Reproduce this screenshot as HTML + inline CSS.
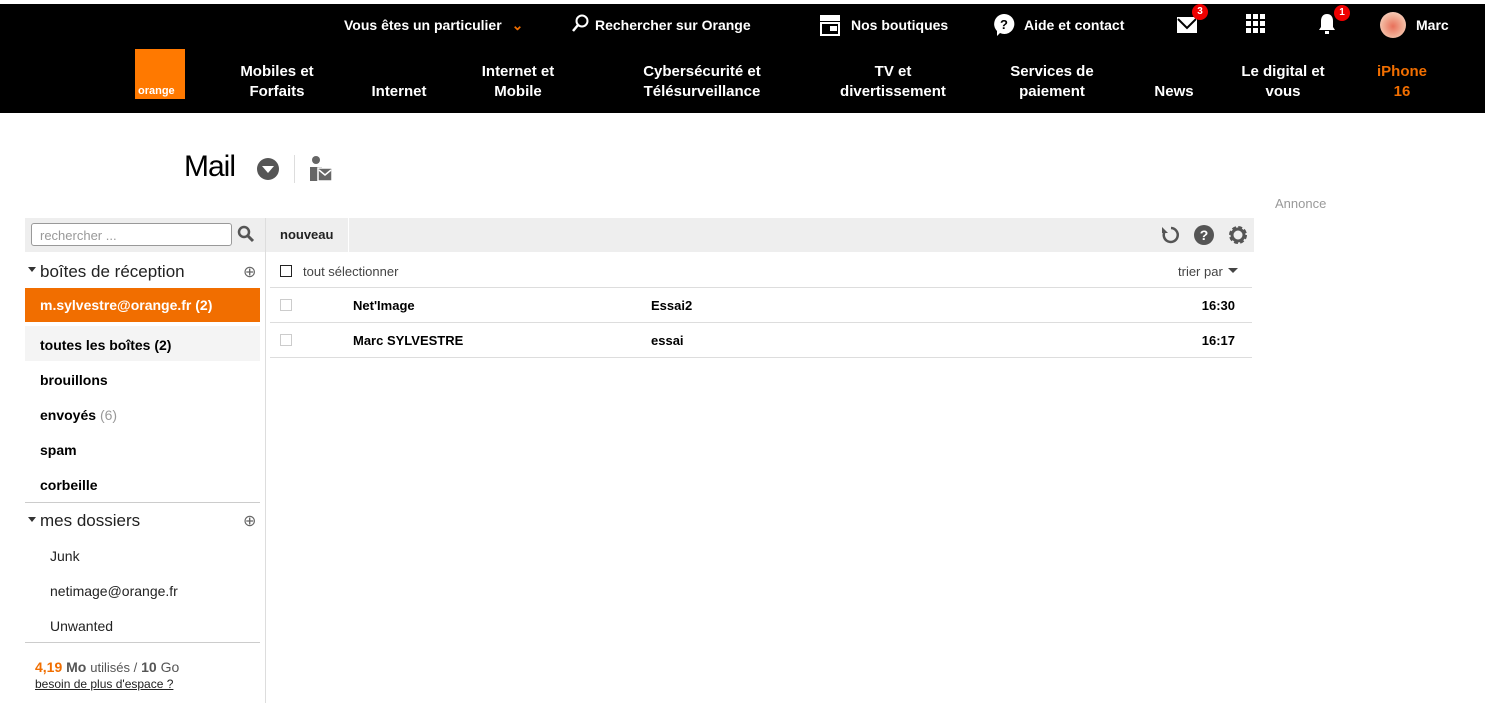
<!DOCTYPE html>
<html><head><meta charset="utf-8"><style>
*{margin:0;padding:0;box-sizing:border-box}
body{width:1485px;height:703px;overflow:hidden;background:#fff;font-family:"Liberation Sans",Arial,sans-serif;color:#000;position:relative}
.a{position:absolute}
.hdr{position:absolute;left:0;top:4px;width:1485px;height:109px;background:#000}
.w{color:#fff;font-weight:bold;font-size:14px;white-space:nowrap}
.nav{color:#fff;font-weight:bold;font-size:15px;text-align:center;line-height:20px;white-space:nowrap}
.badge{position:absolute;width:16px;height:16px;border-radius:8px;background:#e00;color:#fff;font-size:10px;font-weight:bold;text-align:center;line-height:16px}
.side{font-size:14px;font-weight:bold}
.fold{font-size:14px;color:#222}
.row{position:absolute;left:270px;width:982px;height:35px;border-bottom:1px solid #ddd;font-size:13px;font-weight:bold}
.cb{position:absolute;width:12px;height:12px;border:1px solid #ccc}
</style></head><body>
<div class="hdr"></div>
<div class="a w" style="left:344px;top:17px">Vous êtes un particulier <span style="color:#f16e00;margin-left:6px">&#8964;</span></div>
<svg class="a" style="left:571px;top:14px" width="20" height="20" viewBox="0 0 20 20"><circle cx="11" cy="7" r="5.5" fill="none" stroke="#fff" stroke-width="2"/><path d="M7 11L2 17" stroke="#fff" stroke-width="2.5"/></svg>
<div class="a w" style="left:595px;top:17px">Rechercher sur Orange</div>
<svg class="a" style="left:819px;top:14px" width="22" height="22" viewBox="0 0 22 22"><rect x="1" y="1" width="20" height="6" fill="#fff"/><rect x="2" y="9" width="18" height="12" fill="none" stroke="#fff" stroke-width="2"/><rect x="11" y="12" width="7" height="5" fill="#fff"/></svg>
<div class="a w" style="left:851px;top:17px">Nos boutiques</div>
<svg class="a" style="left:992px;top:13px" width="24" height="24" viewBox="0 0 24 24"><path d="M12 1a10 10 0 1 1-4 19l-3 3v-5A10 10 0 0 1 12 1z" fill="#fff"/><text x="12" y="16" text-anchor="middle" font-size="13" font-weight="bold" font-family="Liberation Sans" fill="#000">?</text></svg>
<div class="a w" style="left:1024px;top:17px">Aide et contact</div>
<svg class="a" style="left:1176px;top:16px" width="22" height="18" viewBox="0 0 22 18"><rect x="1" y="1" width="20" height="16" fill="#fff"/><path d="M2 3l9 9 9-9" fill="none" stroke="#000" stroke-width="2"/></svg>
<div class="badge" style="left:1192px;top:4px">3</div>
<svg class="a" style="left:1246px;top:14px" width="20" height="20" viewBox="0 0 20 20" fill="#fff"><rect x="0" y="0" width="5" height="5"/><rect x="7" y="0" width="5" height="5"/><rect x="14" y="0" width="5" height="5"/><rect x="0" y="7" width="5" height="5"/><rect x="7" y="7" width="5" height="5"/><rect x="14" y="7" width="5" height="5"/><rect x="0" y="14" width="5" height="5"/><rect x="7" y="14" width="5" height="5"/><rect x="14" y="14" width="5" height="5"/></svg>
<svg class="a" style="left:1317px;top:13px" width="20" height="22" viewBox="0 0 20 22"><path d="M10 1c4 0 6 3 6 7v6l2 3H2l2-3V8c0-4 2-7 6-7z" fill="#fff"/><rect x="8" y="18" width="4" height="3" fill="#fff"/></svg>
<div class="badge" style="left:1334px;top:5px">1</div>
<div class="a" style="left:1380px;top:12px;width:26px;height:26px;border-radius:13px;background:radial-gradient(circle at 50% 55%,#e8705a 0,#f2b39a 55%,#fbe6dc 100%)"></div>
<div class="a w" style="left:1416px;top:17px">Marc</div>
<div class="a" style="left:135px;top:49px;width:50px;height:50px;background:#ff7900"><span style="position:absolute;left:3px;bottom:2px;color:#fff;font-size:11px;font-weight:bold">orange</span></div>
<div class="a nav" style="left:222px;top:62px;width:110px">Mobiles et<br>Forfaits</div>
<div class="a nav" style="left:360px;top:82px;width:78px">Internet</div>
<div class="a nav" style="left:463px;top:62px;width:110px">Internet et<br>Mobile</div>
<div class="a nav" style="left:622px;top:62px;width:160px">Cybersécurité et<br>Télésurveillance</div>
<div class="a nav" style="left:823px;top:62px;width:140px">TV et<br>divertissement</div>
<div class="a nav" style="left:992px;top:62px;width:120px">Services de<br>paiement</div>
<div class="a nav" style="left:1148px;top:82px;width:52px">News</div>
<div class="a nav" style="left:1228px;top:62px;width:110px">Le digital et<br>vous</div>
<div class="a nav" style="left:1362px;top:62px;width:80px;color:#f16e00">iPhone<br>16</div>

<div class="a" style="left:184px;top:150px;font-size:30px;letter-spacing:-1px">Mail</div>
<div class="a" style="left:257px;top:158px;width:22px;height:22px;border-radius:11px;background:#555"><div style="position:absolute;left:5px;top:8px;border-left:6px solid transparent;border-right:6px solid transparent;border-top:7px solid #fff"></div></div>
<div class="a" style="left:294px;top:155px;width:1px;height:28px;background:#ddd"></div>
<svg class="a" style="left:308px;top:155px" width="26" height="28" viewBox="0 0 26 28"><circle cx="8" cy="5" r="4" fill="#666"/><path d="M2 12h12v14H2z" fill="#666"/><rect x="10" y="13" width="14" height="13" fill="#666" stroke="#fff" stroke-width="1.5"/><path d="M11 15l6 5 6-5" fill="none" stroke="#fff" stroke-width="1.5"/></svg>
<div class="a" style="left:1275px;top:196px;font-size:13px;color:#999">Annonce</div>

<div class="a" style="left:25px;top:218px;width:1229px;height:34px;background:#eee"></div>
<div class="a" style="left:31px;top:223px;width:201px;height:23px;border:1px solid #999;border-radius:3px;background:#fff;font-size:13px;color:#999;padding:4px 8px">rechercher ...</div>
<svg class="a" style="left:237px;top:225px" width="18" height="18" viewBox="0 0 18 18"><circle cx="7" cy="7" r="5" fill="none" stroke="#555" stroke-width="2.5"/><path d="M11 11l5 5" stroke="#555" stroke-width="3"/></svg>
<div class="a" style="left:265px;top:218px;width:1px;height:485px;background:#ddd"></div>
<div class="a" style="left:348px;top:218px;width:1px;height:34px;background:#fff"></div>
<div class="a" style="left:280px;top:227px;font-size:13px;font-weight:bold;color:#222">nouveau</div>
<svg class="a" style="left:1160px;top:225px" width="22" height="20" viewBox="0 0 22 20"><path d="M5 6a7 7 0 1 0 6-3" fill="none" stroke="#555" stroke-width="2.5"/><path d="M2 2v6h6z" fill="#555"/></svg>
<div class="a" style="left:1194px;top:225px;width:20px;height:20px;border-radius:10px;background:#555;color:#fff;font-size:14px;font-weight:bold;text-align:center;line-height:20px">?</div>
<svg class="a" style="left:1227px;top:224px" width="22" height="22" viewBox="0 0 22 22"><circle cx="11" cy="11" r="7" fill="none" stroke="#555" stroke-width="4" stroke-dasharray="3.5 2"/><circle cx="11" cy="11" r="6" fill="none" stroke="#555" stroke-width="3"/></svg>

<svg class="a" style="left:28px;top:267px" width="8" height="6"><path d="M0 0h8L4 5z" fill="#333"/></svg>
<div class="a" style="left:40px;top:262px;font-size:17px;color:#222">boîtes de réception</div>
<div class="a" style="left:243px;top:262px;font-size:16px;color:#666">&#8853;</div>
<div class="a" style="left:25px;top:288px;width:235px;height:34px;background:#f16e00"></div>
<div class="a side" style="left:40px;top:297px;color:#fff">m.sylvestre@orange.fr (2)</div>
<div class="a" style="left:25px;top:326px;width:235px;height:35px;background:#f4f4f4"></div>
<div class="a side" style="left:40px;top:337px">toutes les boîtes (2)</div>
<div class="a side" style="left:40px;top:372px">brouillons</div>
<div class="a side" style="left:40px;top:407px">envoyés <span style="color:#999;font-weight:normal">(6)</span></div>
<div class="a side" style="left:40px;top:442px">spam</div>
<div class="a side" style="left:40px;top:477px">corbeille</div>
<div class="a" style="left:25px;top:502px;width:235px;height:1px;background:#ccc"></div>
<svg class="a" style="left:28px;top:517px" width="8" height="6"><path d="M0 0h8L4 5z" fill="#333"/></svg>
<div class="a" style="left:40px;top:511px;font-size:17px;color:#222">mes dossiers</div>
<div class="a" style="left:243px;top:511px;font-size:16px;color:#666">&#8853;</div>
<div class="a fold" style="left:50px;top:548px">Junk</div>
<div class="a fold" style="left:50px;top:583px">netimage@orange.fr</div>
<div class="a fold" style="left:50px;top:618px">Unwanted</div>
<div class="a" style="left:25px;top:642px;width:235px;height:1px;background:#ccc"></div>
<div class="a" style="left:35px;top:659px;font-size:14px;color:#555"><b style="color:#f16e00">4,19</b> <b>Mo</b> <span style="font-size:13px">utilisés /</span> <b>10</b> Go</div>
<div class="a" style="left:35px;top:677px;font-size:12px;color:#222;text-decoration:underline">besoin de plus d'espace ?</div>

<div class="a" style="left:270px;top:252px;width:982px;height:36px;border-bottom:1px solid #ddd"></div>
<div class="a" style="left:280px;top:265px;width:12px;height:12px;border:1.5px solid #222"></div>
<div class="a" style="left:303px;top:264px;font-size:13px;color:#444">tout sélectionner</div>
<div class="a" style="left:1178px;top:264px;font-size:13px;color:#444">trier par</div>
<svg class="a" style="left:1228px;top:268px" width="10" height="6"><path d="M0 0h10L5 5z" fill="#444"/></svg>
<div class="row" style="top:288px"><div class="cb" style="left:10px;top:11px"></div><span class="a" style="left:83px;top:10px">Net'Image</span><span class="a" style="left:381px;top:10px">Essai2</span><span class="a" style="right:17px;top:10px">16:30</span></div>
<div class="row" style="top:323px"><div class="cb" style="left:10px;top:11px"></div><span class="a" style="left:83px;top:10px">Marc SYLVESTRE</span><span class="a" style="left:381px;top:10px">essai</span><span class="a" style="right:17px;top:10px">16:17</span></div>
</body></html>
